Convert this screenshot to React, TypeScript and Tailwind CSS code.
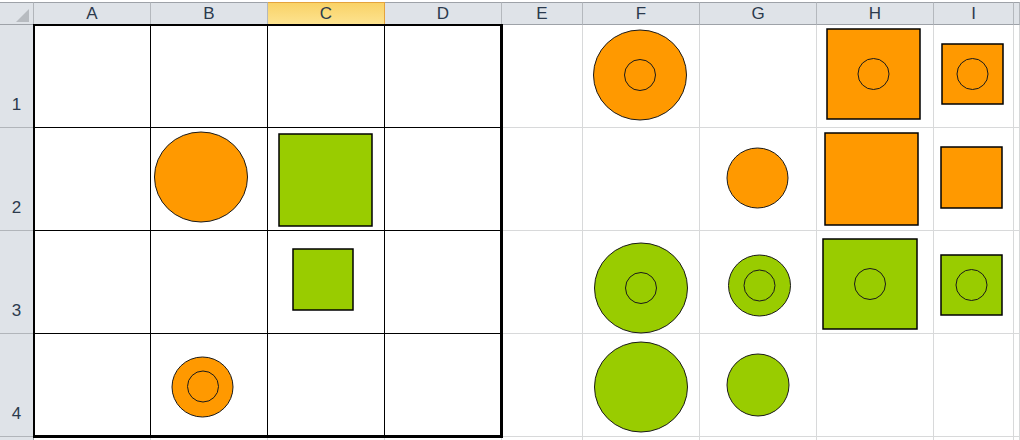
import React from "react";

const cols = ["A", "B", "C", "D", "E", "F", "G", "H", "I", ""];
const rows = [1, 2, 3, 4];
const ORANGE = "#ff9900";
const GREEN = "#99cc00";

function Shapes() {
  const st = { stroke: "#1a1a1a", strokeWidth: 1 };
  const rs = { stroke: "#000", strokeWidth: 1.5 };
  const inner = (cx: number, cy: number) => (
    <circle cx={cx} cy={cy} r={15.5} fill="none" {...st} />
  );
  return (
    <svg
      className="absolute left-0 top-0 pointer-events-none"
      width={1020}
      height={440}
      viewBox="0 0 1020 440"
    >
      {/* row 1 */}
      <ellipse cx={640} cy={75} rx={46.5} ry={45} fill={ORANGE} {...st} />
      {inner(640, 75)}
      <rect x={827} y={29} width={93} height={90} fill={ORANGE} {...rs} />
      {inner(873.5, 74)}
      <rect x={942} y={44} width={61} height={60} fill={ORANGE} {...rs} />
      {inner(972.5, 74)}
      {/* row 2 */}
      <ellipse cx={201} cy={177} rx={46.5} ry={45} fill={ORANGE} {...st} />
      <rect x={279} y={134} width={93} height={92} fill={GREEN} {...rs} />
      <ellipse cx={757.5} cy={178} rx={30.5} ry={30} fill={ORANGE} {...st} />
      <rect x={825} y={133} width={93} height={92} fill={ORANGE} {...rs} />
      <rect x={941} y={147} width={61} height={61} fill={ORANGE} {...rs} />
      {/* row 3 */}
      <rect x={293} y={249} width={60} height={61} fill={GREEN} {...rs} />
      <ellipse cx={641} cy={288} rx={46.5} ry={45} fill={GREEN} {...st} />
      {inner(641, 288)}
      <ellipse cx={759.5} cy={285.5} rx={31} ry={30.5} fill={GREEN} {...st} />
      {inner(759.5, 285.5)}
      <rect x={823} y={239} width={94} height={90} fill={GREEN} {...rs} />
      {inner(870, 284)}
      <rect x={941} y={255} width={61} height={60} fill={GREEN} {...rs} />
      {inner(971.5, 285)}
      {/* row 4 */}
      <ellipse cx={202.5} cy={387} rx={30.5} ry={30} fill={ORANGE} {...st} />
      {inner(203, 386.5)}
      <ellipse cx={641} cy={387} rx={46.5} ry={45} fill={GREEN} {...st} />
      <ellipse cx={758} cy={385} rx={31} ry={31} fill={GREEN} {...st} />
    </svg>
  );
}

export default function App() {
  return (
    <div
      className="relative w-[1020px] h-[440px] overflow-hidden bg-white"
      style={{ fontFamily: '"Liberation Sans", Arial, sans-serif' }}
    >
      <div className="pt-[2px] grid grid-cols-[34px_117px_117px_117px_117px_81px_117px_117px_117px_80px_1fr] grid-rows-[23px_103px_103px_103px_103px_40px]">
        {/* corner */}
        <div className="relative bg-[#dfe3e8] border-t border-t-[#9ea2a8] border-r border-r-[#b1b5ba] border-b border-b-[#9ea2a8]">
          <svg className="absolute left-[16px] top-[6px]" width="14" height="14" viewBox="0 0 14 14">
            <polygon points="13,0 13,13 0,13" fill="#b7bbc0" />
          </svg>
        </div>
        {cols.map((c, i) =>
          c === "C" ? (
            <div
              key={i}
              className="flex items-center justify-center bg-gradient-to-b from-[#f9d266] to-[#fde38f] border-t border-[#e4a33c] border-r border-b text-[17px] leading-none text-[#2b3a4d]"
            >
              {c}
            </div>
          ) : (
            <div
              key={i}
              className="flex items-center justify-center bg-[#dfe3e8] border-t border-t-[#9ea2a8] border-r border-r-[#b4b8bd] border-b border-b-[#9ea2a8] text-[17px] leading-none text-[#2b3a4d]"
            >
              {c}
            </div>
          )
        )}
        {rows.map((r) => (
          <React.Fragment key={r}>
            <div className="flex items-end justify-center pb-[14px] bg-[#dfe3e8] border-r border-r-[#9ea2a8] border-b border-b-[#b1b5ba] text-[17px] leading-none text-[#2b3a4d]">
              {r}
            </div>
            {cols.map((c, i) => (
              <div
                key={i}
                className={
                  i < 4
                    ? "bg-white border-r border-b border-black"
                    : "bg-white border-r border-b border-[#d8d9da]"
                }
              />
            ))}
          </React.Fragment>
        ))}
        <div className="bg-[#dfe3e8] border-r border-r-[#9ea2a8]" />
        {cols.map((c, i) => (
          <div key={i} className="bg-white border-r border-[#d8d9da]" />
        ))}
      </div>
      <div className="absolute left-[33px] top-[24px] w-[470px] h-[414px] border-black border-l-2 border-t-2 border-r-[3px] border-b-[3px] pointer-events-none" />
      <Shapes />
    </div>
  );
}
